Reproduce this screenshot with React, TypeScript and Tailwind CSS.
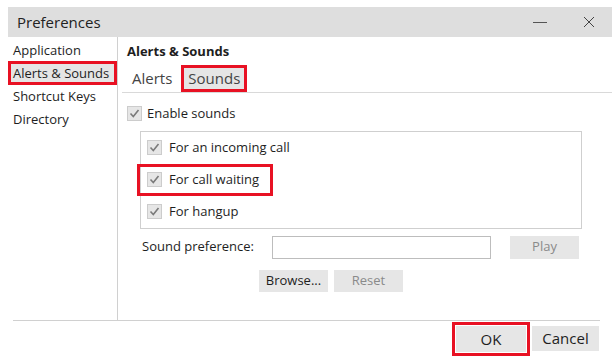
import React from "react";

function Check() {
  return (
    <span className="flex h-[15px] w-[15px] shrink-0 items-center justify-center border border-[#cccccc] bg-[#e6e6e6]">
      <svg width="11" height="11" viewBox="0 0 11 11">
        <path d="M1.5 5.5 L4.3 8.5 L9.5 2" fill="none" stroke="#7a7a7a" strokeWidth="1.6" />
      </svg>
    </span>
  );
}

function Row({ label, boxed }: { label: string; boxed?: boolean }) {
  return (
    <div className={"flex h-[32px] items-center gap-[7px] " + (boxed ? "-mx-[4px] w-[136px] border-[3px] border-[#e81123] px-[7px]" : "px-[6px]")}>
      <Check />
      <span className="text-[13px] text-[#1e1e1e]">{label}</span>
    </div>
  );
}

export default function App() {
  return (
    <div className="h-[359px] w-[612px] overflow-hidden bg-white pt-[7px] pl-[8px] font-['Open_Sans',sans-serif] text-[13px] text-[#1e1e1e]">
      <div className="flex h-[30px] items-center bg-[#dedede] pl-[9px]">
        <span className="flex-1 text-[15px] text-[#222]">Preferences</span>
        <span className="mr-[36px] h-px w-[14px] bg-[#555]" />
        <svg width="12" height="12" viewBox="0 0 12 12" className="mr-[17px]">
          <path d="M1 1 L11 11 M11 1 L1 11" stroke="#444" strokeWidth="1" />
        </svg>
      </div>
      <div className="flex h-[283px]">
        <div className="w-[110px] border-r border-[#d0d0d0] pt-[3px]">
          <div className="pl-[5px] leading-[21px]">Application</div>
          <div className="border-[3px] border-[#e81123] bg-[#e5e5e5] pl-[2px] leading-[18px]">Alerts &amp; Sounds</div>
          <div className="pl-[5px] leading-[23px]">Shortcut Keys</div>
          <div className="pl-[5px] leading-[23px]">Directory</div>
        </div>
        <div className="flex-1 pl-[4px]">
          <div className="pt-[5px] pl-[5px] text-[13px] font-bold leading-[18px]">Alerts &amp; Sounds</div>
          <div className="mt-[5px] flex h-[28px] items-end border-b border-[#d9d9d9] pl-[10px] pr-[6px] text-[15px] text-[#444]">
            <span className="mr-[9px] pb-[3px]">Alerts</span>
            <span className="border-[3px] border-[#e81123] bg-[#e5e5e5] px-[4px] leading-[21px]">Sounds</span>
          </div>
          <div className="mt-[11px] flex items-center gap-[5px] pl-[5px]">
            <Check />
            <span>Enable sounds</span>
          </div>
          <div className="mt-[7px] ml-[18px] flex h-[98px] w-[442px] flex-col justify-center border border-[#cfcfcf]">
            <Row label="For an incoming call" />
            <Row label="For call waiting" boxed />
            <Row label="For hangup" />
          </div>
          <div className="mt-[7px] flex items-center pl-[20px]">
            <span className="w-[130px]">Sound preference:</span>
            <span className="h-[23px] w-[219px] border border-[#bdbdbd]" />
            <span className="ml-[19px] flex h-[23px] w-[69px] items-center justify-center bg-[#e6e6e6] text-[#8a8a8a]">Play</span>
          </div>
          <div className="mt-[11px] flex gap-[6px] pl-[137px]">
            <span className="flex h-[22px] w-[69px] items-center justify-center bg-[#e6e6e6]">Browse...</span>
            <span className="flex h-[22px] w-[69px] items-center justify-center bg-[#e6e6e6] text-[#8a8a8a]">Reset</span>
          </div>
        </div>
      </div>
      <div className="ml-[5px] mr-[12px] border-t border-[#d0d0d0]" />
      <div className="mt-[1px] flex justify-end gap-[2px] pr-[13px]">
        <span className="flex h-[34px] w-[78px] items-center justify-center border-[3px] border-[#e81123] bg-[#e6e6e6] text-[15px] ring-1 ring-inset ring-white">OK</span>
        <span className="mt-[4px] flex h-[25px] w-[67px] items-center justify-center bg-[#e6e6e6] text-[15px]">Cancel</span>
      </div>
    </div>
  );
}
